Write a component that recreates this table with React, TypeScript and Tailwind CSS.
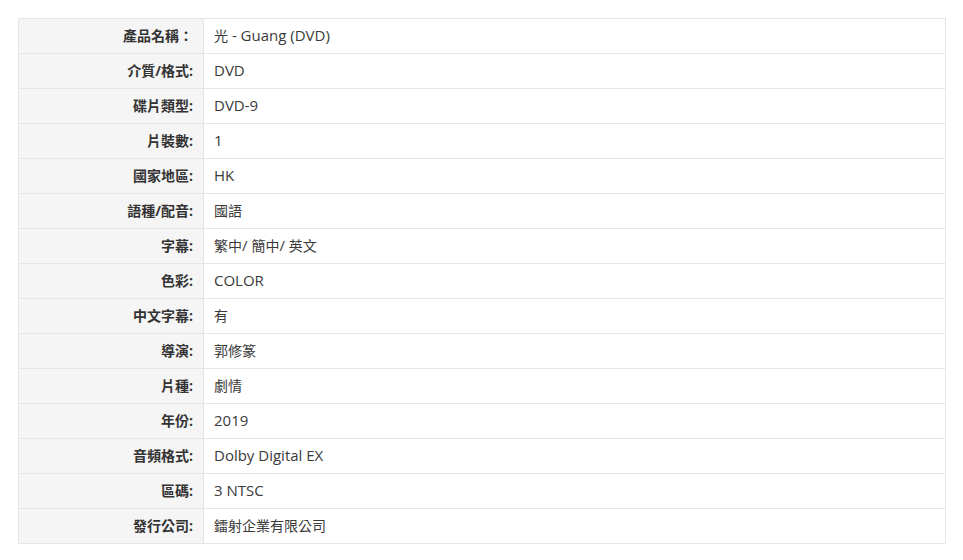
const rows: [string, string][] = [
  ['產品名稱：', '光 - Guang (DVD)'],
  ['介質/格式:', 'DVD'],
  ['碟片類型:', 'DVD-9'],
  ['片裝數:', '1'],
  ['國家地區:', 'HK'],
  ['語種/配音:', '國語'],
  ['字幕:', '繁中/ 簡中/ 英文'],
  ['色彩:', 'COLOR'],
  ['中文字幕:', '有'],
  ['導演:', '郭修篆'],
  ['片種:', '劇情'],
  ['年份:', '2019'],
  ['音頻格式:', 'Dolby Digital EX'],
  ['區碼:', '3 NTSC'],
  ['發行公司:', '鐳射企業有限公司'],
]

// latin runs are a touch larger than the CJK ones in the original
function Value({ text }: { text: string }) {
  const parts = text.split(/([\u3000-\u9fff]+)/).filter(Boolean)
  return (
    <>
      {parts.map((p, i) =>
        /[\u3000-\u9fff]/.test(p) ? (
          <span key={i}>{p}</span>
        ) : (
          <span key={i} className="text-[15px]">
            {p}
          </span>
        )
      )}
    </>
  )
}

export default function App() {
  return (
    <div
      className="min-h-screen bg-white pt-[18px] pl-[18px]"
      style={{ fontFamily: '"Open Sans", "Noto Sans CJK TC", sans-serif' }}
    >
      <table className="w-[928px] border-collapse text-[14px] leading-5">
        <tbody>
          {rows.map(([label, value]) => (
            <tr key={label} className="h-[35px]">
              <td className="w-[185px] border border-[#e6e6e6] bg-[#f5f5f5] pr-[10px] pb-[1px] text-right font-bold text-[#333]">
                {label}
              </td>
              <td className="border border-[#e6e6e6] pl-[10px] pb-[1px] text-[#3a3a3a]">
                <Value text={value} />
              </td>
            </tr>
          ))}
        </tbody>
      </table>
    </div>
  )
}
